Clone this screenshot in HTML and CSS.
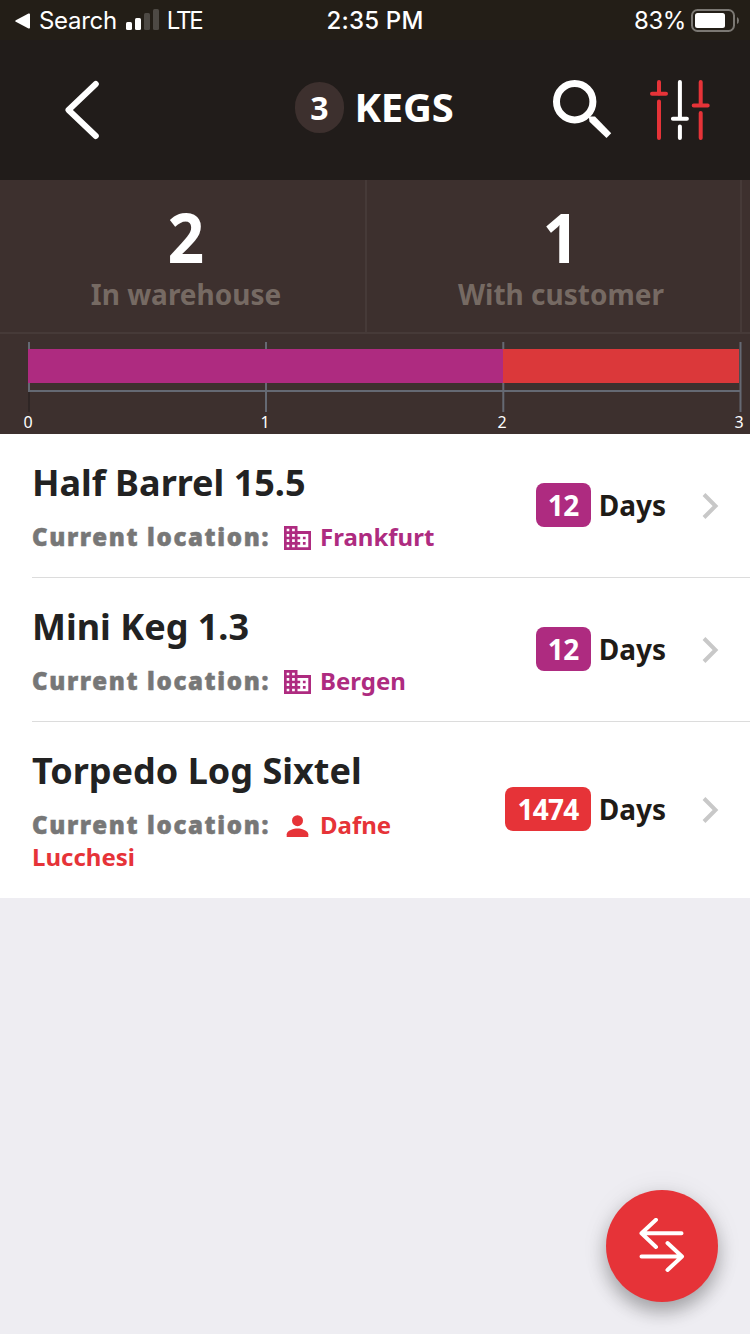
FILE: index.html
```html
<!DOCTYPE html>
<html lang="en">
<head>
<meta charset="utf-8">
<title>Kegs</title>
<link rel="stylesheet" href="styles.css">
</head>
<body>
<div class="screen">
  <div class="status">
    <div class="status-left">
      <svg class="back-tri" width="16" height="16" viewBox="0 0 16 16"><path d="M.8 7.200 13.500.6q1.500-.6 1.500.8v13.200q0 1.400-1.500.8L.8 8.800q-1.200-.8 0-1.600z" fill="#fff"/></svg>
      <span class="search-label">Search</span>
      <svg class="signal" width="34" height="22" viewBox="0 0 34 22"><g fill="#fff"><rect x="0" y="13" width="6" height="8" rx="1.500"/><rect x="9" y="9" width="6" height="12" rx="1.500"/></g><g fill="#4d4944"><rect x="18" y="4" width="6" height="17" rx="1.500"/><rect x="27" y="0" width="6" height="21" rx="1.500"/></g></svg>
      <span class="lte">LTE</span>
    </div>
    <div class="clock">2:35 PM</div>
    <div class="status-right">
      <span class="percent">83%</span>
      <svg width="50" height="24" viewBox="0 0 50 24"><rect x="1" y="1" width="42" height="21" rx="5.500" fill="none" stroke="#7b7873" stroke-width="2"/><rect x="4" y="4" width="30" height="15" rx="2.500" fill="#fff"/><path d="M46 8q2 1 2 3.500T46 15z" fill="#7b7873"/></svg>
    </div>
  </div>

  <header class="header">
    <svg class="back" width="36" height="60" viewBox="0 0 36 60"><path d="M31.800 4 4.500 30 31.800 56" fill="none" stroke="#fff" stroke-width="6" stroke-linecap="round" stroke-linejoin="round"/></svg>
    <div class="title"><span class="count">3</span><h1>KEGS</h1></div>
    <div class="actions">
      <svg width="60" height="60" viewBox="0 0 60 60"><circle cx="22.700" cy="21.700" r="18.200" fill="none" stroke="#fff" stroke-width="7"/><path d="M36.800 36.500H43L59.200 53.200 54.500 58 37.500 41.800z" fill="#fff"/></svg>
      <svg width="60" height="60" viewBox="0 0 60 60" fill="none" stroke-width="4" stroke-linecap="round"><g stroke="#e63338"><path d="M9 2v12M2 13.700h14M9 21.500V58M50.700 2v23M43.700 25.400h14M50.700 33V58"/></g><path d="M29.900 2v36M22.900 38.800h14M29.900 46.500V58" stroke="#fff"/></svg>
    </div>
  </header>

  <section class="stats">
    <div class="stat"><strong>2</strong><span>In warehouse</span></div>
    <div class="stat"><strong>1</strong><span>With customer</span></div>
    <div class="stat-next"></div>
  </section>

  <section class="chart">
    <svg width="750" height="100" viewBox="0 0 750 100">
      <path d="M29 8v49M266 8v70M503.300 8v70M740.500 8v70M28 57h713.500" fill="none" stroke="#656973" stroke-width="2"/>
      <path d="M29 58v20" stroke="#2f2625" stroke-width="2"/>
      <rect x="28" y="15" width="475" height="34" fill="#ae2b80"/>
      <rect x="503" y="15" width="236" height="34" fill="#db383a"/>
      <g class="ticks"><text x="28" y="94">0</text><text x="265" y="94">1</text><text x="502" y="94">2</text><text x="739" y="94">3</text></g>
    </svg>
  </section>

  <main class="list">
    <article class="row">
      <div class="info">
        <h2>Half Barrel 15.5</h2>
        <p class="place"><span class="label">Current location:</span><svg class="place-icon" width="28" height="24" viewBox="0 0 28 24"><path d="M13.500 5V0H0v24h27V5zM5.300 21.300H2.700v-2.600h2.600zm0-5.300H2.700v-2.700h2.600zm0-5.300H2.700V8h2.600zm0-5.400H2.700V2.700h2.600zm5.500 16H8.100v-2.600h2.700zm0-5.300H8.100v-2.700h2.700zm0-5.300H8.100V8h2.700zm0-5.400H8.100V2.700h2.700zm13.500 16H13.500v-2.600h2.700V16h-2.700v-2.700h2.700v-2.600h-2.700V8h10.800zm-2.700-10.600h-2.700v2.600h2.700zm0 5.300h-2.700v2.700h2.700z" fill="currentColor"/></svg><span class="name">Frankfurt</span></p>
      </div>
      <div class="age"><span class="badge">12</span><span class="days">Days</span></div>
      <svg class="chev" width="18" height="28" viewBox="0 0 18 28"><path d="M3 2.500 14.500 14 3 25.500" fill="none" stroke="#c8c8c8" stroke-width="4"/></svg>
    </article>
    <article class="row">
      <div class="info">
        <h2>Mini Keg 1.3</h2>
        <p class="place"><span class="label">Current location:</span><svg class="place-icon" width="28" height="24" viewBox="0 0 28 24"><path d="M13.500 5V0H0v24h27V5zM5.300 21.300H2.700v-2.600h2.600zm0-5.300H2.700v-2.700h2.600zm0-5.300H2.700V8h2.600zm0-5.400H2.700V2.700h2.600zm5.500 16H8.100v-2.600h2.700zm0-5.300H8.100v-2.700h2.700zm0-5.300H8.100V8h2.700zm0-5.400H8.100V2.700h2.700zm13.500 16H13.500v-2.600h2.700V16h-2.700v-2.700h2.700v-2.600h-2.700V8h10.800zm-2.700-10.600h-2.700v2.600h2.700zm0 5.300h-2.700v2.700h2.700z" fill="currentColor"/></svg><span class="name">Bergen</span></p>
      </div>
      <div class="age"><span class="badge">12</span><span class="days">Days</span></div>
      <svg class="chev" width="18" height="28" viewBox="0 0 18 28"><path d="M3 2.500 14.500 14 3 25.500" fill="none" stroke="#c8c8c8" stroke-width="4"/></svg>
    </article>
    <article class="row late">
      <div class="info">
        <h2>Torpedo Log Sixtel</h2>
        <p class="place"><span class="label">Current location:</span><svg class="place-icon" width="28" height="24" viewBox="0 0 28 24"><circle cx="13.500" cy="6.700" r="5.500" fill="currentColor"/><path d="M2.700 23v-2.800c0-3.700 7.200-5.700 10.800-5.700s10.800 2 10.800 5.700V23z" fill="currentColor"/></svg><span class="name">Dafne<br>Lucchesi</span></p>
      </div>
      <div class="age"><span class="badge">1474</span><span class="days">Days</span></div>
      <svg class="chev" width="18" height="28" viewBox="0 0 18 28"><path d="M3 2.500 14.500 14 3 25.500" fill="none" stroke="#c8c8c8" stroke-width="4"/></svg>
    </article>
  </main>

  <div class="fab">
    <svg width="46" height="56" viewBox="0 0 46 56" fill="none" stroke="#fff" stroke-width="4" stroke-linecap="round" stroke-linejoin="round"><path d="M42.500 15.300H2.500M17 1.800 2.500 15.300 17 29M2.500 38.500H42.500M28.500 25 43 38.500 28.500 52"/></svg>
  </div>
</div>
</body>
</html>
```
FILE: styles.css
```css
* { box-sizing: border-box; margin: 0; padding: 0; }
body { font-family: "Noto Sans", sans-serif; background: #eeedf2; }
svg { display: block; flex: none; }
.screen { position: relative; width: 750px; height: 1334px; overflow: hidden; background: #eeedf2; display: flex; flex-direction: column; }

.status { height: 40px; flex: none; display: grid; grid-template-columns: 1fr auto 1fr; background: #231e17; color: #fff; font: 400 24px/42px Inter, sans-serif; }
.status-left { display: flex; align-items: center; padding-left: 15px; }
.search-label { margin-left: 8px; letter-spacing: -0.3px; }
.signal { margin-left: 9px; margin-top: -2px; overflow: visible; }
.lte { margin-left: 7px; letter-spacing: -2.2px; }
.clock { font-weight: 500; letter-spacing: 0.2px; }
.status-right { display: flex; align-items: center; justify-content: flex-end; gap: 5px; padding-right: 9px; }
.percent { letter-spacing: -0.4px; }

.header { height: 140px; flex: none; display: grid; grid-template-columns: 231px 1fr auto; background: #211c1a; color: #fff; padding: 0 40px 0 64px; }
.back { margin-top: 40px; }
.title { display: flex; align-items: center; gap: 10.5px; height: 134px; }
.count { width: 49px; height: 51px; border-radius: 25px; background: #3d302e; font-size: 32px; font-weight: 700; line-height: 52px; text-align: center; }
h1 { font-size: 40px; font-weight: 700; line-height: 56px; letter-spacing: -0.2px; }
.actions { display: flex; justify-content: flex-end; gap: 38px; padding-top: 40px; }

.stats { height: 154px; flex: none; display: flex; background: #3d302e; border-bottom: 2px solid #463a38; }
.stat { border-right: 2px solid #463a38; display: flex; flex-direction: column; align-items: center; padding-top: 16px; }
.stat:first-child { width: 367px; padding-left: 7px; }
.stat:nth-child(2) { width: 375px; padding-left: 15px; }
.stat strong { color: #fff; font-size: 69px; font-weight: 700; line-height: 80px; transform: scaleX(.93); }
.stat span { color: #766a63; font-size: 28px; font-weight: 700; line-height: 36px; }
.chart { height: 100px; flex: none; background: #3d302e; }
.ticks { font-size: 16px; fill: #fff; text-anchor: middle; }

.list { background: #fff; flex: none; }
.row { height: 144px; margin-left: 32px; padding-right: 31px; display: flex; align-items: center; border-bottom: 1px solid #dcdcdc; color: #ae2b80; }
.row.late { height: 176px; border: 0; color: #e63338; }
.info { width: 420px; align-self: flex-start; padding-top: 24px; }
h2 { font-size: 36px; font-weight: 700; line-height: 50px; color: #222; }
.place { margin-top: 13px; font-size: 24px; font-weight: 700; line-height: 32px; white-space: nowrap; }
.label { font-weight: 900; color: #777; letter-spacing: 1.65px; -webkit-text-stroke: 0.5px #777; }
.place-icon { display: inline-block; vertical-align: -4px; margin: 0 8px 0 14px; }
.age { margin-left: auto; display: flex; align-items: center; gap: 8px; font-size: 28px; margin-top: -2px; }
.badge { height: 44px; line-height: 44px; padding: 0 12px; border-radius: 8px; background: #ae2b80; color: #fff; font-weight: 700; letter-spacing: -0.5px; }
.late .badge { background: #e63338; letter-spacing: -0.7px; }
.days { color: #1f1b17; font-weight: 700; line-height: 42px; }
.chev { margin-left: 35px; }

.fab { position: absolute; right: 32px; bottom: 32px; width: 112px; height: 112px; border-radius: 50%; background: #e63338; display: flex; align-items: center; justify-content: center; box-shadow: 0 10px 18px rgba(0,0,0,.28), 0 2px 28px rgba(0,0,0,.08); }
```
